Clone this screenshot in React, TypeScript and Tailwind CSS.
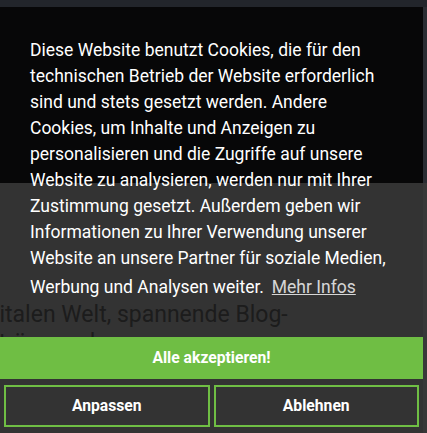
import React from 'react';

// Cookie-Banner über einer abgedunkelten Seite (cookieconsent-Stil)
const FONT = { fontFamily: 'Roboto, "Noto Sans", "Liberation Sans", sans-serif' };

function BehindPage() {
  return (
    <div className="flex h-full w-full">
      <div className="flex w-[423px] flex-col">
        <div className="h-[176px] bg-[#23262c]" />
        <div className="flex-1 bg-white pt-[118px]">
          <p className="ml-[-32px] whitespace-nowrap text-[23px] leading-[28px] text-[#8c8c8c]">
            digitalen Welt, spannende Blog-
            <br />
            beiträge und
          </p>
        </div>
      </div>
      <div className="flex w-[4px] flex-col">
        <div className="h-[176px] bg-[#2a2d33]" />
        <div className="flex-1 bg-[#383838]" />
      </div>
    </div>
  );
}

export default function App() {
  return (
    <div className="relative h-[433px] w-[427px] overflow-hidden bg-[#22252b]" style={FONT}>
      <div className="absolute inset-x-0 top-[7px] bottom-0">
        <BehindPage />
      </div>

      {/* the banner itself */}
      <div className="absolute top-[7px] bottom-0 left-0 w-[423px] flex flex-col bg-black/80 text-white">
        <p className="px-[30px] pt-[30px] text-[17.5px] leading-[26px]">
          Diese Website benutzt Cookies, die für den technischen Betrieb der Website erforderlich
          sind und stets gesetzt werden. Andere Cookies, um Inhalte und Anzeigen zu personalisieren
          und die Zugriffe auf unsere Website zu analysieren, werden nur mit Ihrer Zustimmung gesetzt.
          Außerdem geben wir Informationen zu Ihrer Verwendung unserer Website an unsere Partner für
          soziale Medien, Werbung und Analysen weiter.{' '}
          <a href="#" className="inline-block px-[3.5px] py-[3px] underline opacity-80">Mehr Infos</a>
        </p>

        <div className="mt-auto flex flex-col">
          <button className="h-[42px] w-full bg-[#6fbe44] text-[15.7px] font-bold text-white">
            Alle akzeptieren!
          </button>
          <div className="flex gap-[4px] px-[4px] pt-[6px] pb-[6px]">
            <button className="h-[42px] flex-1 border-2 border-[#6fbe44] text-[15.7px] font-bold text-white">
              Anpassen
            </button>
            <button className="h-[42px] flex-1 border-2 border-[#6fbe44] text-[15.7px] font-bold text-white">
              Ablehnen
            </button>
          </div>
        </div>
      </div>
    </div>
  );
}
